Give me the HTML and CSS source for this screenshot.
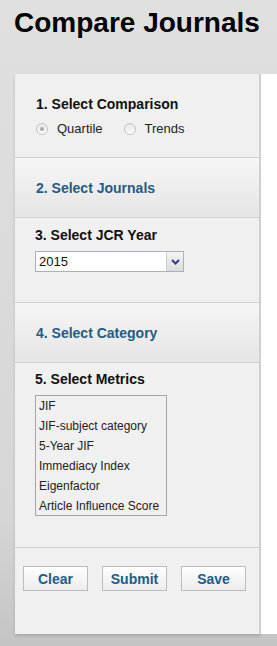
FILE: index.html
```html
<!DOCTYPE html>
<html lang="en">
<head>
    <meta charset="UTF-8">
    <title>Compare Journals</title>
    <link rel="stylesheet" href="styles.css">
</head>
<body>

<h1 class="title">Compare Journals</h1>

<div class="content">
    <div class="panel">
        <div class="section s1">
            <div class="heading">1. Select Comparison</div>
            <div class="radios">
                <span class="radio checked"></span><span class="radio-label">Quartile</span>
                <span class="radio"></span><span class="radio-label">Trends</span>
            </div>
        </div>

        <div class="section collapsed">
            <div class="heading blue">2. Select Journals</div>
        </div>

        <div class="section s3">
            <div class="heading">3. Select JCR Year</div>
            <div class="select">
                <span class="select-value">2015</span>
                <span class="select-arrow">
                    <svg width="9" height="6" viewBox="0 0 9 6"><path d="M1 1 L4.5 4.5 L8 1" fill="none" stroke="#2b3f86" stroke-width="2"/></svg>
                </span>
            </div>
        </div>

        <div class="section collapsed">
            <div class="heading blue">4. Select Category</div>
        </div>

        <div class="section s5">
            <div class="heading">5. Select Metrics</div>
            <ul class="listbox">
                <li>JIF</li>
                <li>JIF-subject category</li>
                <li>5-Year JIF</li>
                <li>Immediacy Index</li>
                <li>Eigenfactor</li>
                <li>Article Influence Score</li>
            </ul>
        </div>

        <div class="actions">
            <button>Clear</button>
            <button>Submit</button>
            <button>Save</button>
        </div>
    </div>
    <div class="side"></div>
</div>

</body>
</html>
```

FILE: styles.css
```css
* {
    box-sizing: border-box;
    font-family: "Liberation Sans", Arial, sans-serif;
}
body {
    margin: 0;
    height: 646px;
    overflow: hidden;
    background: linear-gradient(to bottom, #e0e0e0, #d6d6d6 80%, #c4c4c4);
}
.title {
    margin: 0;
    padding: 7px 0 0 14px;
    height: 74px;
    font-size: 28px;
    font-weight: bold;
    color: #000;
}
.content {
    display: flex;
    height: 560px;
}
.panel {
    margin-left: 15px;
    width: 246px;
    background: #f0f0f0;
    border-right: 2px solid #cfcfcf;
    box-shadow: 0 2px 3px rgba(0,0,0,0.15);
}
.side {
    flex: 1;
    background: #fff;
}
.section {
    border-bottom: 1px solid #d2d2d2;
    padding-left: 21px;
}
.heading {
    font-size: 14px;
    font-weight: bold;
    color: #111;
    line-height: 16px;
}
.heading.blue {
    color: #1f5c86;
}
.s1 {
    height: 84px;
    padding-top: 22px;
}
.radios {
    display: flex;
    align-items: center;
    margin-top: 9px;
    font-size: 13px;
    color: #222;
}
.radio {
    width: 12px;
    height: 12px;
    border-radius: 50%;
    border: 1px solid #c4c4c4;
    background: linear-gradient(to bottom, #e6e6e6, #fbfbfb);
    display: flex;
    align-items: center;
    justify-content: center;
}
.radio.checked::after {
    content: "";
    width: 4px;
    height: 4px;
    border-radius: 50%;
    background: #a8a8a8;
}
.radio-label {
    margin-left: 9px;
    margin-right: 21px;
}
.collapsed {
    height: 60px;
    display: flex;
    align-items: center;
    background: linear-gradient(to bottom, #f6f6f6, #e5e5e5);
    padding-top: 0;
}
.s3 {
    height: 85px;
    padding-top: 9px;
    padding-left: 20px;
}
.select {
    display: flex;
    width: 149px;
    height: 21px;
    margin-top: 8px;
    border: 1px solid #a9b0c4;
    background: #fff;
}
.select-value {
    flex: 1;
    font-size: 13px;
    line-height: 19px;
    padding-left: 3px;
    color: #111;
}
.select-arrow {
    width: 17px;
    border-left: 1px solid #c8ccd6;
    background: linear-gradient(to bottom, #f4f4f4, #dcdcdc);
    display: flex;
    align-items: center;
    justify-content: center;
}
.s5 {
    height: 185px;
    padding-top: 8px;
    padding-left: 20px;
}
.listbox {
    list-style: none;
    margin: 8px 0 0;
    padding: 0 0 0 3px;
    width: 132px;
    height: 121px;
    border: 1px solid #a6a6a6;
    font-size: 12px;
    line-height: 20px;
    color: #222;
}
.actions {
    display: flex;
    gap: 14px;
    padding: 18px 0 0 8px;
}
button {
    width: 65px;
    height: 25px;
    padding: 0;
    border: 1px solid #bcbcbc;
    background: linear-gradient(to bottom, #ffffff, #ececec);
    color: #1f5c86;
    font-size: 14px;
    font-weight: bold;
    cursor: pointer;
}
```
